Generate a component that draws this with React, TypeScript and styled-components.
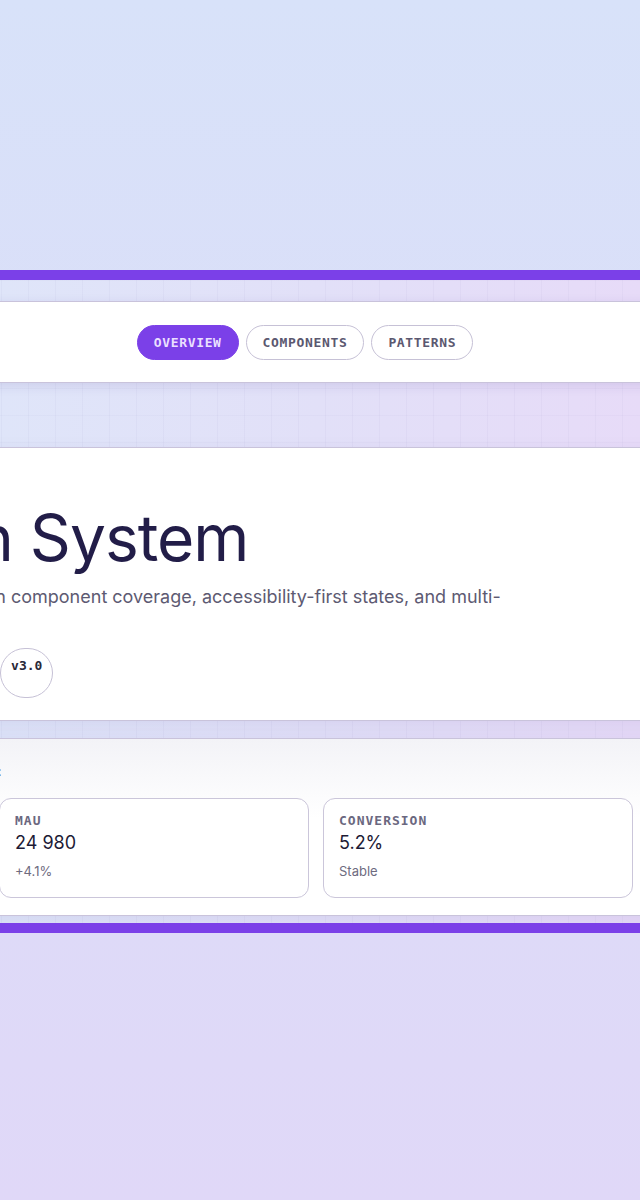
import React from 'react';
import styled, { createGlobalStyle } from 'styled-components';

const Global = createGlobalStyle`
  html, body { margin: 0; padding: 0; }
  body {
    background: linear-gradient(180deg, #d8e2f9 0%, #dcdcf8 55%, #e0d8f8 100%);
    font-family: Inter, "Noto Sans", sans-serif;
    overflow: hidden;
  }
  * { box-sizing: border-box; }
`;

const Page = styled.div`
  height: 1200px;
  padding-top: 270px;
  overflow: hidden;
`;

const Frame = styled.div`
  border-top: 10px solid #7b40e8;
  border-bottom: 10px solid #7b40e8;
  padding: 21px 0 7px;
  overflow: hidden;
  background:
    linear-gradient(rgba(110, 100, 170, 0.035) 1px, transparent 1px) 0 0 / 27px 27px,
    linear-gradient(90deg, rgba(110, 100, 170, 0.045) 1px, transparent 1px) 1px 0 / 27px 27px,
    linear-gradient(90deg, #dfe5f9 0%, #e2e0f8 50%, #e7dbf8 100%);
`;

const Shell = styled.div`
  width: 1302px;
  margin-left: -346px;
  display: flex;
  flex-direction: column;
`;

const Panel = styled.section`
  background: #fff;
  border: 1px solid #c9c3db;
  box-shadow: 0 6px 18px rgba(70, 50, 140, 0.08);
`;

const TopBar = styled(Panel)`
  display: grid;
  grid-template-columns: 1fr auto 1fr;
  align-items: center;
  padding: 23px 22px 22px;
  box-shadow: 0 3px 10px rgba(70, 50, 140, 0.12);
`;

const Brand = styled.div`
  font-weight: 600;
  font-size: 16px;
  color: #221d48;
`;

const Nav = styled.nav`
  display: flex;
  gap: 7px;
`;

const Pill = styled.button<{ $active?: boolean }>`
  height: 35px;
  padding: 0 16px;
  border-radius: 18px;
  border: 1px solid ${(p) => (p.$active ? '#7b40e8' : '#c6c1d6')};
  background: ${(p) => (p.$active ? '#7b40e8' : '#ffffff')};
  color: ${(p) => (p.$active ? '#eadfff' : '#5b5870')};
  font-family: "DejaVu Sans Mono", "Liberation Mono", monospace;
  font-weight: 700;
  font-size: 13px;
  letter-spacing: 0.65px;
  cursor: pointer;
`;

const Actions = styled.div`
  justify-self: end;
  font-size: 13px;
  color: #5b5870;
`;

const Hero = styled(Panel)`
  margin-top: 64px;
  display: flex;
  gap: 24px;
  padding: 55px 22px 22px;
`;

const Tile = styled.div`
  width: 108px;
  height: 108px;
  flex: none;
  border-radius: 20px;
  background: linear-gradient(135deg, #7b40e8, #b18cf5);
`;

const TextCol = styled.div`
  display: flex;
  flex-direction: column;
  width: 722px;
`;

const Title = styled.h1`
  margin: 0;
  font-family: Inter, "Noto Sans", sans-serif;
  font-weight: 400;
  font-size: 64px;
  line-height: 70px;
  letter-spacing: -1px;
  color: #221d48;
`;

const Lead = styled.p`
  margin: 9px 0 0;
  font-size: 18px;
  line-height: 29px;
  color: #5d5a72;
`;

const BadgeRow = styled.div`
  display: flex;
  gap: 7px;
  margin-top: 8px;
`;

const Badge = styled.span`
  display: flex;
  align-items: flex-start;
  height: 50px;
  padding: 9px 10px;
  border: 1px solid #c6c1d6;
  border-radius: 999px;
  font-family: "DejaVu Sans Mono", "Liberation Mono", monospace;
  font-weight: 700;
  font-size: 13px;
  color: #2a2838;
`;

const Stats = styled(Panel)`
  margin-top: 17px;
  padding: 23px 20px 17px;
  background: linear-gradient(180deg, #f3f3f7 0%, #ffffff 45%);
`;

const StatsLabel = styled.div`
  font-size: 13px;
  line-height: 18px;
  color: #4a475e;
`;

const Cards = styled.div`
  margin-top: 18px;
  display: grid;
  grid-template-columns: repeat(3, 310px);
  gap: 14px;
`;

const Card = styled.div`
  border: 1px solid #cbc6da;
  border-radius: 12px;
  background: #fff;
  padding: 14px 15px 17px;
  display: flex;
  flex-direction: column;
`;

const CardLabel = styled.div`
  font-family: "DejaVu Sans Mono", "Liberation Mono", monospace;
  font-weight: 700;
  font-size: 13px;
  line-height: 16px;
  letter-spacing: 1px;
  color: #6b6880;
`;

const CardValue = styled.div`
  font-size: 18px;
  line-height: 24px;
  color: #1d1a35;
  margin-top: 2px;
`;

const CardSub = styled.div`
  font-size: 13px;
  line-height: 18px;
  color: #6e6b80;
  margin-top: 7px;
`;

const metrics = [
  { label: 'ACTIVE TEAMS', value: '312', sub: '+12 this week' },
  { label: 'MAU', value: '24 980', sub: '+4.1%' },
  { label: 'CONVERSION', value: '5.2%', sub: 'Stable' },
];

export default function App() {
  return (
    <>
      <Global />
      <Page>
        <Frame>
          <Shell>
            <TopBar>
              <Brand>Aurora DS</Brand>
              <Nav>
                <Pill $active>OVERVIEW</Pill>
                <Pill>COMPONENTS</Pill>
                <Pill>PATTERNS</Pill>
              </Nav>
              <Actions>Docs</Actions>
            </TopBar>
            <Hero>
              <Tile />
              <TextCol>
                <Title>Design System</Title>
                <Lead>
                  Global tokens first then component coverage, accessibility-first states, and multi-brand theming.
                </Lead>
                <BadgeRow>
                  <Badge>STABLE</Badge>
                  <Badge>WCAG 2.2 AA</Badge>
                  <Badge>v3.0</Badge>
                </BadgeRow>
              </TextCol>
            </Hero>
            <Stats>
              <StatsLabel>Product health across this release cycle, key metrics:</StatsLabel>
              <Cards>
                {metrics.map((m) => (
                  <Card key={m.label}>
                    <CardLabel>{m.label}</CardLabel>
                    <CardValue>{m.value}</CardValue>
                    <CardSub>{m.sub}</CardSub>
                  </Card>
                ))}
              </Cards>
            </Stats>
          </Shell>
        </Frame>
      </Page>
    </>
  );
}
